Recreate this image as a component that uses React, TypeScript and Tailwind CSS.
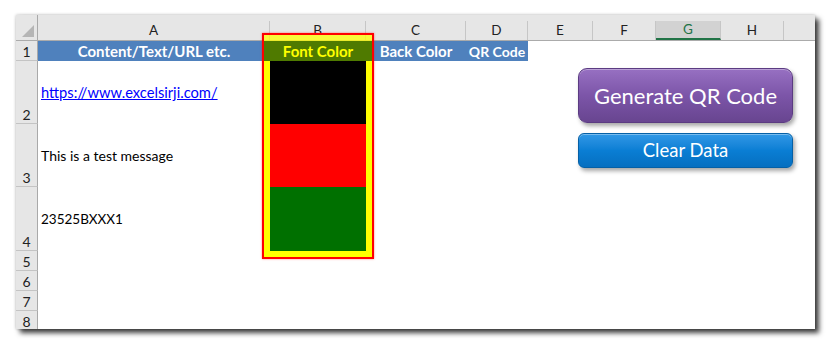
import React from "react";

const FONT = "font-['Lato','Open_Sans',sans-serif]";

function ColHead({ w, label, active }: { w: string; label: string; active?: boolean }) {
  return (
    <div className={`${w} h-full pt-[6px]`}>
      <div
        className={
          active
            ? "h-full flex items-center justify-center border-r border-[#c6c6c6] bg-[#d2d2d2] border-b-2 border-b-[#217346] text-[#217346]"
            : "h-full flex items-center justify-center border-r border-[#c6c6c6]"
        }
      >
        {label}
      </div>
    </div>
  );
}

function RowNum({ n, h }: { n: number; h: string }) {
  return (
    <div className={`${h} w-[22px] shrink-0 bg-[#e6e6e6] border-r border-r-[#a9a9a9] border-b border-b-[#c4c4c4] flex items-end justify-center pb-[1px] text-[14px] font-normal leading-none text-[#222]`}>
      {n}
    </div>
  );
}

export default function App() {
  return (
    <div className={`min-h-screen bg-white pl-[16px] pt-[15px] ${FONT}`}>
      <div className="relative w-[799px] h-[314px] bg-white overflow-hidden shadow-[0_0_3px_rgba(0,0,0,0.25),4px_4px_5px_rgba(0,0,0,0.75)]">
        {/* Column headers */}
        <div className="flex h-[26px] bg-[#e6e6e6] border-b border-[#ababab] text-[13.5px] text-[#222]">
          <div className="w-[22px] h-full border-r border-[#a9a9a9] flex items-end justify-end pr-[3px] pb-[3px]">
            <svg width="12" height="12" viewBox="0 0 12 12">
              <polygon points="12,0 12,12 0,12" fill="#b5b5b5" />
            </svg>
          </div>
          <ColHead w="w-[232px]" label="A" />
          <ColHead w="w-[96px]" label="B" />
          <ColHead w="w-[100px]" label="C" />
          <ColHead w="w-[62px]" label="D" />
          <ColHead w="w-[65px]" label="E" />
          <ColHead w="w-[63px]" label="F" />
          <ColHead w="w-[65px]" label="G" active />
          <ColHead w="w-[63px]" label="H" />
          <div className="flex-1" />
        </div>

        {/* Row 1 */}
        <div className="flex h-[20px] text-[15px] font-bold">
          <RowNum n={1} h="h-[20px]" />
          <div className="w-[232px] bg-[#4f81bd] text-white flex items-center justify-center">Content/Text/URL etc.</div>
          <div className="w-[96px] bg-[#4f7a00] text-[#ffff00] flex items-center justify-center">Font Color</div>
          <div className="w-[100px] bg-[#4f81bd] text-white flex items-center justify-center">Back Color</div>
          <div className="w-[62px] bg-[#4f81bd] text-white text-[14px] flex items-center justify-center">QR Code</div>
        </div>

        {/* Row 2 */}
        <div className="flex h-[63px] text-[14.7px] text-black">
          <RowNum n={2} h="h-[63px]" />
          <div className="w-[232px] flex items-center pl-[3px]">
            <span className="text-[#0000ff] underline">https://www.excelsirji.com/</span>
          </div>
          <div className="w-[96px] bg-black" />
        </div>

        {/* Row 3 */}
        <div className="flex h-[63px] text-[14px] text-black">
          <RowNum n={3} h="h-[63px]" />
          <div className="w-[232px] flex items-center pl-[3px]">This is a test message</div>
          <div className="w-[96px] bg-[#ff0000]" />
        </div>

        {/* Row 4 */}
        <div className="flex h-[64px] text-[13.5px] text-black">
          <RowNum n={4} h="h-[64px]" />
          <div className="w-[232px] flex items-center pl-[3px]">23525BXXX1</div>
          <div className="w-[96px] bg-[#007000]" />
        </div>

        <div className="flex h-[20px]"><RowNum n={5} h="h-[20px]" /></div>
        <div className="flex h-[20px]"><RowNum n={6} h="h-[20px]" /></div>
        <div className="flex h-[20px]"><RowNum n={7} h="h-[20px]" /></div>
        <div className="flex h-[20px]"><RowNum n={8} h="h-[20px]" /></div>

        {/* Highlight frame around column B */}
        <div className="absolute left-[246px] top-[18px] w-[112px] h-[226px] border-2 border-[#ff0000] shadow-[0_0_2px_rgba(255,0,0,0.5)] flex flex-col">
          <div className="h-[6px] bg-[#ffff00]/75" />
          <div className="h-[20px] flex">
            <div className="w-[6px] bg-[#4f7a00]" />
            <div className="flex-1" />
            <div className="w-[6px] bg-[#4f7a00]" />
          </div>
          <div className="flex-1 border-x-[6px] border-b-[6px] border-[#ffff00]" />
        </div>

        {/* Buttons */}
        <button className="absolute left-[562px] top-[53px] w-[215px] h-[55px] rounded-[9px] bg-linear-to-b from-[#9770c2] via-[#7c55a8] to-[#684590] border border-[#5b3b82] text-white text-[22px] shadow-[2px_3px_4px_rgba(0,0,0,0.35),inset_0_1px_0_rgba(255,255,255,0.35)] flex items-center justify-center">
          Generate QR Code
        </button>
        <button className="absolute left-[562px] top-[118px] w-[215px] h-[35px] rounded-[6px] bg-linear-to-b from-[#2f98e6] via-[#0a7ed4] to-[#066fc0] border border-[#0560a6] text-white text-[18.5px] shadow-[2px_3px_4px_rgba(0,0,0,0.35),inset_0_1px_0_rgba(255,255,255,0.35)] flex items-center justify-center">
          Clear Data
        </button>
      </div>
    </div>
  );
}
